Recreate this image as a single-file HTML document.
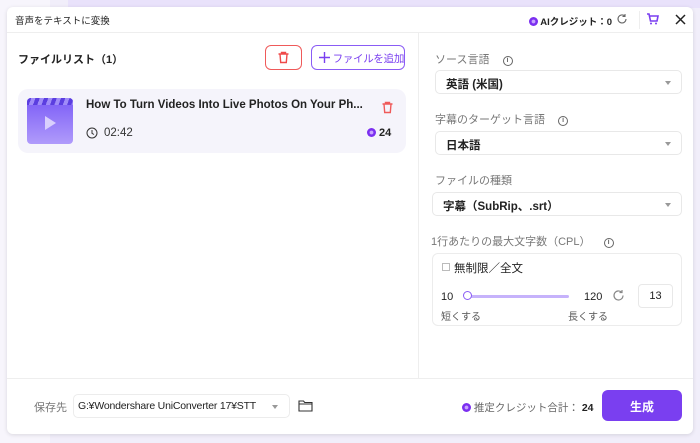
<!DOCTYPE html>
<html><head><meta charset="utf-8"><style>
*{box-sizing:border-box;margin:0;padding:0}
body{width:700px;height:443px;overflow:hidden;background:#f1eefa;font-family:"Liberation Sans","Noto Sans CJK JP",sans-serif;position:relative;color:#222}
.bgtop{position:absolute;left:0;top:0;width:50px;height:443px;background:#f7f5fc}
.bgtop2{position:absolute;left:68px;top:0;width:632px;height:8px;background:#e9e2fb}
.dlg{position:absolute;left:7px;top:7px;width:686px;height:427px;background:#fff;border-radius:6px;box-shadow:0 1px 4px rgba(0,0,0,.12)}
.abs{position:absolute}
.hdr{left:0;top:0;width:686px;height:26px;border-bottom:1px solid #eee}
.lbl{font-size:11px;color:#777;white-space:nowrap}
.sel{position:absolute;left:428px;width:247px;height:24px;border:1px solid #e8e8e8;border-radius:5px;font-size:11.5px;font-weight:bold;padding:5px 0 0 10px}
.sel:after{content:"";position:absolute;right:10px;top:10px;border:3.5px solid transparent;border-top:4px solid #999}
.info{display:inline-block;width:10px;height:10px;border:1px solid #666;border-radius:50%;font-size:7px;text-align:center;line-height:8px;color:#666;margin-left:10px;vertical-align:1px;font-weight:bold}
.coin{display:inline-block;width:9px;height:9px;border-radius:50%;background:radial-gradient(circle,#c9a4ff 25%,#7b2ff0 35%);vertical-align:-1px}
</style></head><body>
<div class="bgtop"></div><div class="bgtop2"></div>
<div class="dlg">
 <div class="abs hdr"></div>
 <div class="abs" style="left:8px;top:6px;font-size:9.5px">音声をテキストに変換</div>
 <div class="abs" style="left:522px;top:7px;font-size:9.5px;font-weight:bold;white-space:nowrap"><span class="coin"></span> AIクレジット：0</div>
 <svg class="abs" style="left:609px;top:6px" width="12" height="12" viewBox="0 0 12 12"><path d="M10 6a4 4 0 1 1-1.3-3M9 1v2.5H6.5" fill="none" stroke="#666" stroke-width="1.1"/></svg>
 <div class="abs" style="left:632px;top:4px;width:1px;height:18px;background:#eee"></div>
 <svg class="abs" style="left:639px;top:6px" width="13" height="12" viewBox="0 0 13 12"><path d="M1 1h2l1.5 7h6.5l1-5H4" fill="none" stroke="#7a3ff0" stroke-width="1.6"/><circle cx="5" cy="10.5" r="1" fill="#7a3ff0"/><circle cx="10" cy="10.5" r="1" fill="#7a3ff0"/></svg>
 <svg class="abs" style="left:668px;top:7px" width="11" height="11" viewBox="0 0 11 11"><path d="M1 1l9 9M10 1l-9 9" stroke="#222" stroke-width="1.5"/></svg>
 <div class="abs" style="left:411px;top:26px;width:1px;height:345px;background:#eee"></div>
 <div class="abs" style="left:0;top:371px;width:686px;height:1px;background:#eee"></div>

 <div class="abs" style="left:11px;top:44px;font-size:11px;font-weight:bold">ファイルリスト（1）</div>
 <div class="abs" style="left:258px;top:38px;width:37px;height:25px;border:1px solid #ef5a5a;border-radius:6px"></div>
 <svg class="abs" style="left:270px;top:44px" width="13" height="13" viewBox="0 0 13 13"><path d="M1.5 3h10M4.5 3V1.5h4V3M3 3l.7 8.5h5.6L10 3" fill="none" stroke="#ef4a4a" stroke-width="1.4"/></svg>
 <div class="abs" style="left:304px;top:38px;width:94px;height:25px;border:1px solid #8a5cf5;border-radius:6px;color:#7a3ff0;font-size:10.5px;padding:5px 0 0 7px;white-space:nowrap;letter-spacing:-0.3px"><svg width="11" height="11" viewBox="0 0 11 11" style="vertical-align:-1px"><path d="M5.5 0v11M0 5.5h11" stroke="#7a3ff0" stroke-width="1.4"/></svg> ファイルを追加</div>

 <div class="abs" style="left:11px;top:82px;width:388px;height:64px;background:#f5f4fb;border-radius:10px"></div>
 <div class="abs" style="left:20px;top:91px;width:46px;height:46px;border-radius:4px;background:linear-gradient(#7b5cf6,#b09bfb);overflow:hidden">
  <div style="height:7px;background:repeating-linear-gradient(110deg,#5b3ee0 0 4px,#a08cf8 4px 8px)"></div>
  <div style="position:absolute;left:18px;top:18px;border-left:11px solid #d9cffd;border-top:7px solid transparent;border-bottom:7px solid transparent"></div>
 </div>
 <div class="abs" style="left:79px;top:92px;font-size:11.5px;font-weight:bold">How To Turn Videos Into Live Photos On Your Ph...</div>
 <svg class="abs" style="left:374px;top:94px" width="13" height="13" viewBox="0 0 13 13"><path d="M1.5 3h10M4.5 3V1.5h4V3M3 3l.7 8.5h5.6L10 3" fill="none" stroke="#ef5a5a" stroke-width="1.4"/></svg>
 <svg class="abs" style="left:79px;top:120px" width="12" height="12" viewBox="0 0 12 12"><circle cx="6" cy="6" r="5" fill="none" stroke="#333" stroke-width="1"/><path d="M6 3v3.3l2 1.2" fill="none" stroke="#333"/></svg>
 <div class="abs" style="left:97px;top:120px;font-size:11.5px;color:#333">02:42</div>
 <div class="abs" style="left:360px;top:120px;font-size:11px;font-weight:bold"><span class="coin"></span> 24</div>

 <div class="abs lbl" style="left:428px;top:44px">ソース言語 <span class="info">i</span></div>
 <div class="sel" style="top:63px">英語 (米国)</div>
 <div class="abs lbl" style="left:428px;top:104px">字幕のターゲット言語 <span class="info">i</span></div>
 <div class="sel" style="top:124px">日本語</div>
 <div class="abs lbl" style="left:428px;top:165px">ファイルの種類</div>
 <div class="sel" style="top:185px;left:425px;width:250px">字幕（SubRip、.srt）</div>
 <div class="abs lbl" style="left:424px;top:226px">1行あたりの最大文字数（CPL） <span class="info">i</span></div>
 <div class="abs" style="left:425px;top:246px;width:250px;height:73px;border:1px solid #ececec;border-radius:6px"></div>
 <div class="abs" style="left:435px;top:256px;width:8px;height:8px;border:1px solid #bbb"></div>
 <div class="abs" style="left:447px;top:253px;font-size:11.5px">無制限／全文</div>
 <div class="abs" style="left:434px;top:284px;font-size:11px">10</div>
 <div class="abs" style="left:459px;top:288px;width:103px;height:3px;background:#c6b2fb;border-radius:2px"></div>
 <div class="abs" style="left:456px;top:284px;width:9px;height:9px;border:1.5px solid #8a5cf5;border-radius:50%;background:#fff"></div>
 <div class="abs" style="left:577px;top:284px;font-size:11px">120</div>
 <svg class="abs" style="left:605px;top:282px" width="13" height="13" viewBox="0 0 13 13"><path d="M11 6.5a4.5 4.5 0 1 1-1.4-3.3M10 1v2.5H7.5" fill="none" stroke="#888" stroke-width="1.2"/></svg>
 <div class="abs" style="left:631px;top:277px;width:35px;height:24px;border:1px solid #e8e8e8;border-radius:4px;font-size:11px;text-align:center;padding-top:5px">13</div>
 <div class="abs" style="left:434px;top:301px;font-size:10px;color:#555">短くする</div>
 <div class="abs" style="left:561px;top:301px;font-size:10px;color:#555">長くする</div>

 <div class="abs" style="left:27px;top:392px;font-size:11px;color:#777">保存先</div>
 <div class="abs" style="left:66px;top:387px;width:217px;height:24px;border:1px solid #ececec;border-radius:5px;font-size:10.5px;padding:5px 0 0 4px;white-space:nowrap;letter-spacing:-0.2px">G:¥Wondershare UniConverter 17¥STT</div>
 <div class="abs" style="left:265px;top:398px;border:3.5px solid transparent;border-top:4px solid #999"></div>
 <svg class="abs" style="left:291px;top:392px" width="15" height="13" viewBox="0 0 15 13"><path d="M1 2h4.5l1.2 1.5H14V12H1z M1 5h13" fill="none" stroke="#333" stroke-width="1.1"/></svg>
 <div class="abs" style="left:455px;top:393px;font-size:10.5px;color:#666;white-space:nowrap"><span class="coin"></span> 推定クレジット合計： <b style="color:#222">24</b></div>
 <div class="abs" style="left:595px;top:383px;width:80px;height:31px;background:#7a3ff0;border-radius:6px;color:#fff;font-size:12px;font-weight:bold;text-align:center;padding-top:8px">生成</div>
</div>
</body></html>
